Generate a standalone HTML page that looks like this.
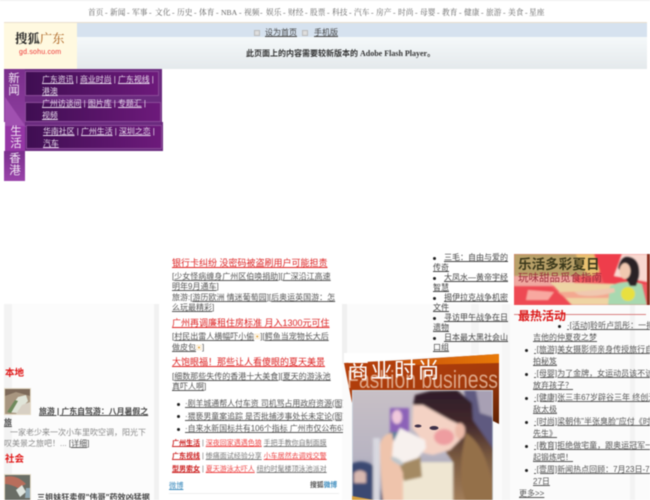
<!DOCTYPE html>
<html><head><meta charset="utf-8">
<style>
html,body{margin:0;padding:0;background:#fff}
#p{position:relative;width:650px;height:500px;overflow:hidden;background:#fff;font-family:"Liberation Serif","Noto Serif CJK SC",serif;color:#444;filter:blur(.4px)}
.a{position:absolute;white-space:nowrap}
.s{font-family:"Liberation Sans","Noto Sans CJK SC",sans-serif}
u{text-decoration:underline}
.n span{position:absolute;top:0;color:#666}
.pn{position:absolute;background:linear-gradient(90deg,#3f0e52,#6d1a7b);border:1px solid #8a4a98;box-sizing:border-box}
.l{position:absolute;white-space:nowrap;font:7.9px/11px "Liberation Sans","Noto Sans CJK SC",sans-serif;color:#e9dcee}
.t{position:absolute;color:#f2e6f5;font:11.5px/12px "Liberation Sans","Noto Sans CJK SC",sans-serif;text-align:center;width:22px}
.h{color:#d22;font:9px/11px "Liberation Sans","Noto Sans CJK SC",sans-serif;white-space:nowrap;position:absolute;text-decoration:underline}
.b{font:8px/10.3px "Liberation Sans","Noto Sans CJK SC",sans-serif;color:#555;position:absolute;white-space:nowrap}
.d{position:absolute;width:3px;height:3px;border-radius:50%;background:#222}
.r{font:8px/12px "Liberation Sans","Noto Sans CJK SC",sans-serif;color:#555;position:absolute;white-space:nowrap;text-decoration:underline}
.c{font:8px/10px "Liberation Sans","Noto Sans CJK SC",sans-serif;color:#444;position:absolute;white-space:nowrap;text-decoration:underline}
</style></head><body><div id="p">
<div class="a" style="left:0;top:0;width:650px;height:1px;background:#eee"></div>
<div class="n" style="position:absolute;left:0;top:7px;font-size:7.7px;line-height:11px;white-space:nowrap">
<span style="left:88px">首页</span><span style="left:105px">-</span><span style="left:110px">新闻</span><span style="left:127px">-</span><span style="left:132px">军事</span><span style="left:149px">-</span><span style="left:155px">文化</span><span style="left:172px">-</span><span style="left:177px">历史</span><span style="left:194px">-</span><span style="left:199px">体育</span><span style="left:216px">-</span><span style="left:221px">NBA</span><span style="left:239px">-</span><span style="left:244px">视频</span><span style="left:260px">-</span><span style="left:266px">娱乐</span><span style="left:283px">-</span><span style="left:288px">财经</span><span style="left:305px">-</span><span style="left:310px">股票</span><span style="left:327px">-</span><span style="left:332px">科技</span><span style="left:349px">-</span><span style="left:354px">汽车</span><span style="left:371px">-</span><span style="left:376px">房产</span><span style="left:393px">-</span><span style="left:398px">时尚</span><span style="left:415px">-</span><span style="left:420px">母婴</span><span style="left:437px">-</span><span style="left:442px">教育</span><span style="left:459px">-</span><span style="left:464px">健康</span><span style="left:481px">-</span><span style="left:486px">旅游</span><span style="left:503px">-</span><span style="left:508px">美食</span><span style="left:525px">-</span><span style="left:529px">星座</span>
</div>
<!-- header -->
<div class="a" style="left:4px;top:22px;width:643px;height:1px;background:#eadfce"></div>
<div class="a" style="left:4px;top:23px;width:73px;height:46px;background:#fff9e0"></div>
<div class="a" style="left:15px;top:31px;font:bold 12.4px/15px 'Noto Serif CJK SC',serif;color:#222">搜狐<span style="color:#a85a14;font-weight:normal">广东</span></div>
<div class="a s" style="left:19px;top:48px;font-size:7px;line-height:10px;color:#e33;letter-spacing:.2px">gd.sohu.com</div>
<div class="a" style="left:77px;top:23px;width:570px;height:14px;background:#d6e2ef"></div>
<div class="a" style="left:77px;top:37px;width:570px;height:32px;background:linear-gradient(#f5f9fa,#e4e9ec)"></div>
<div class="a" style="left:254px;top:30px;width:6px;height:6px;background:#dedede;border:.5px solid #bbb;box-sizing:border-box"></div>
<div class="a" style="left:265px;top:27px;font:8px/11px 'Liberation Sans','Noto Sans CJK SC',sans-serif;color:#444"><u>设为首页</u></div>
<div class="a" style="left:302px;top:30px;width:6px;height:6px;background:#dedede;border:.5px solid #bbb;box-sizing:border-box"></div>
<div class="a" style="left:314px;top:27px;font:8px/11px 'Liberation Sans','Noto Sans CJK SC',sans-serif;color:#444"><u>手机版</u></div>
<div class="a" style="left:246px;top:48px;font:bold 8px/11px 'Liberation Serif','Noto Sans CJK SC',serif;color:#333">此页面上的内容需要较新版本的 Adobe Flash Player。</div>
<!-- purple menu -->
<div class="a" style="left:4px;top:69px;width:158px;height:53px;background:#6a2a7e"></div>
<div class="a" style="left:4px;top:69px;width:21px;height:60px;background:linear-gradient(#7a2f8c,#8f3fa0)"></div>
<div class="a" style="left:25px;top:122px;width:138px;height:29px;background:#6a2a7e"></div>
<div class="a" style="left:5px;top:97px;width:21px;height:30px;background:#a050b0;clip-path:polygon(0 0,100% 100%,0 100%)"></div>
<div class="a" style="left:4px;top:122px;width:1px;height:29px;background:#fff"></div>
<div class="pn" style="left:25px;top:71px;width:134px;height:25px"></div>
<div class="pn" style="left:25px;top:102px;width:136px;height:20px"></div>
<div class="pn" style="left:26px;top:125px;width:136px;height:24px"></div>
<div class="a" style="left:5px;top:126px;width:20px;height:25px;background:#9536a5"></div>
<div class="t" style="left:3px;top:73px">新<br>闻</div>
<div class="t" style="left:5px;top:126px">生<br>活</div>
<div class="a" style="left:4px;top:151px;width:21px;height:30px;background:linear-gradient(#7a2f8c,#9a44aa)"></div>
<div class="t" style="left:4px;top:153px">香<br>港</div>
<div class="l" style="left:42px;top:74px"><u>广东资讯</u> | <u>商业时尚</u> | <u>广东视线</u> |</div>
<div class="l" style="left:42px;top:86px"><u>港澳</u></div>
<div class="l" style="left:42px;top:98px"><u>广州访谈间</u> | <u>图片库</u> | <u>专题汇</u> |</div>
<div class="l" style="left:42px;top:110px"><u>视频</u></div>
<div class="l" style="left:43px;top:126px"><u>华南社区</u> | <u>广州生活</u> | <u>深圳之恋</u> |</div>
<div class="l" style="left:43px;top:138px"><u>汽车</u></div>
<!-- lower backgrounds -->
<div class="a" style="left:4px;top:304px;width:155px;height:196px;background:#fcfcfc"></div>
<div class="a" style="left:4px;top:304px;width:8px;height:196px;background:#f3f3f3"></div>
<div class="a" style="left:154px;top:304px;width:5px;height:196px;background:#f1f1f1"></div>
<div class="a" style="left:342px;top:304px;width:308px;height:196px;background:#fbfbfb"></div>
<div class="a" style="left:342px;top:304px;width:5px;height:60px;background:#f0f0f0"></div>
<div class="a" style="left:471px;top:304px;width:8px;height:50px;background:#f4f4f4"></div>
<div class="a" style="left:502px;top:304px;width:8px;height:196px;background:#f6f6f6"></div>
<div class="a" style="left:630px;top:304px;width:5px;height:196px;background:#f3f3f3"></div>
<!-- left col -->
<div class="a s" style="left:5px;top:368px;font-size:9.5px;line-height:12px;font-weight:bold;color:#e01818">本地</div>
<svg class="a" style="left:4px;top:388px" width="27" height="27" viewBox="0 0 27 27"><rect width="27" height="27" fill="#a89680"/><path d="M1,1 H26 V8 L12,4 L1,8Z" fill="#7d6a5a"/><path d="M3,24 L14,9 L22,7 L24,13 L13,25Z" fill="#e0e4d8"/><path d="M3,24 L11,12 L14,13 L7,25Z" fill="#6f8a5c"/><path d="M18,17 L26,14 V26 H12Z" fill="#d8d0c4"/><rect x=".5" y=".5" width="26" height="26" fill="none" stroke="#e5dcc8"/></svg>
<div class="a s" style="left:39px;top:406px;font-size:7.9px;line-height:11px;font-weight:bold;color:#444"><u>旅游 | 广东自驾游：八月暑假之</u></div>
<div class="a s" style="left:4px;top:417px;font-size:7.9px;line-height:11px;font-weight:bold;color:#444"><u>旅</u></div>
<div class="a s" style="left:10px;top:427px;font-size:8px;line-height:11px;color:#888">一家老少来一次小车里吹空调，阳光下</div>
<div class="a s" style="left:4px;top:437.5px;font-size:8px;line-height:11px;color:#888">叹美景之旅吧！... <span style="color:#555"><u>[详细]</u></span></div>
<div class="a s" style="left:5px;top:454px;font-size:9.5px;line-height:12px;font-weight:bold;color:#e01818">社会</div>
<svg class="a" style="left:4px;top:474px" width="27" height="27" viewBox="0 0 27 27"><rect width="27" height="27" fill="#6a6e66"/><path d="M1,3 Q12,0 22,10 L14,14 Q6,10 1,10Z" fill="#b86e5c"/><path d="M12,16 L18,11 L22,18 L16,23Z" fill="#dfe6e0"/><path d="M22,14 H26 V24 H21Z" fill="#8fa8b4"/><rect x=".5" y=".5" width="26" height="26" fill="none" stroke="#e5dcc8"/></svg>
<div class="a s" style="left:37px;top:492px;font-size:8.1px;line-height:11px;font-weight:bold;color:#444"><u>三姐妹狂卖假"伟哥"药效凶猛据</u></div>
<!-- middle col -->
<div class="h" style="left:172px;top:258px">银行卡纠纷 没密码被盗刷用户可能担责</div>
<div class="b" style="left:172px;top:272px">[<u>少女怪病缠身广州区伯唤捐助</u>][<u>广深沿江高速</u><br><u>明年9月通车</u>]</div>
<div class="b" style="left:172px;top:293px">旅游:[<u>游历欧洲 情迷葡萄园</u>][<u>后奥运英国游：怎</u><br><u>么玩最精彩</u>]</div>
<div class="h" style="left:172px;top:318px">广州再调廉租住房标准 月入1300元可住</div>
<div class="b" style="left:172px;top:332px">[<u>村民出雷人横幅吓小偷</u><span style="color:#e8b050;font-size:6px">▣</span>][<u>鳄鱼当宠物长大后</u><br><u>做皮包</u><span style="color:#e8b050;font-size:6px">▣</span>]</div>
<div class="h" style="left:172px;top:357px">大饱眼福！那些让人看傻眼的夏天美景</div>
<div class="b" style="left:172px;top:372px">[<u>细数那些失传的香港十大美食</u>][<u>夏天的游泳池</u><br><u>真吓人啊</u>]</div>
<div class="d" style="left:177px;top:403px"></div>
<div class="d" style="left:177px;top:415px"></div>
<div class="d" style="left:177px;top:428px"></div>
<div class="a" style="left:185px;top:398px;width:158px;overflow:hidden;font:7.9px/12px 'Liberation Sans','Noto Sans CJK SC',sans-serif;color:#555"><u>·剧羊城通帮人付车资 司机骂占用政府资源(图)</u></div>
<div class="a" style="left:185px;top:411px;width:158px;overflow:hidden;font:7.9px/12px 'Liberation Sans','Noto Sans CJK SC',sans-serif;color:#555"><u>·猥亵男童案追踪 是否批捕涉事处长未定论(图)</u></div>
<div class="a" style="left:185px;top:423px;width:158px;overflow:hidden;font:7.9px/12px 'Liberation Sans','Noto Sans CJK SC',sans-serif;color:#555"><u>·自来水新国标共有106个指标 广州市仅公布6项</u></div>
<div class="a s" style="left:172px;top:438px;font-size:7px;line-height:11px;color:#777"><b style="color:#c22"><u>广州生活</u></b> | <span style="color:#e44"><u>深夜回家遇遇色狼</u></span> <u>手把手教你自制面膜</u></div>
<div class="a s" style="left:172px;top:451px;font-size:7px;line-height:11px;color:#777"><b style="color:#c22"><u>广东视线</u></b> | <u>惨痛面试经验分享</u> <span style="color:#e44"><u>小车居然去调戏交警</u></span></div>
<div class="a s" style="left:172px;top:464px;font-size:7px;line-height:11px;color:#777"><b style="color:#c22"><u>型男索女</u></b> | <span style="color:#e44"><u>夏天游泳太吓人</u></span> <u>纽约时髦楼顶泳池派对</u></div>
<div class="a s" style="left:169px;top:480px;font-size:7.2px;line-height:11px;color:#3c8bbd"><u>微博</u></div>
<div class="a s" style="left:310px;top:480px;font-size:6.8px;line-height:11px;font-weight:bold;color:#555">搜狐<span style="color:#3c8bbd">微博</span></div>
<div class="a" style="left:169px;top:493px;width:170px;height:1px;background:#eee"></div>
<!-- center list -->
<div class="d" style="left:433px;top:257px"></div>
<div class="d" style="left:433px;top:277px"></div>
<div class="d" style="left:433px;top:297px"></div>
<div class="d" style="left:433px;top:317px"></div>
<div class="d" style="left:433px;top:337px"></div>
<div class="c" style="left:444px;top:253px">三毛：自由与爱的</div><div class="c" style="left:433px;top:263px">传奇</div>
<div class="c" style="left:444px;top:273px">大凤水—黄帝宇经</div><div class="c" style="left:433px;top:283px">智慧</div>
<div class="c" style="left:444px;top:293px">揭伊拉克战争机密</div><div class="c" style="left:433px;top:303px">文件</div>
<div class="c" style="left:444px;top:313px">寻访甲午战争在日</div><div class="c" style="left:433px;top:323px">遗物</div>
<div class="c" style="left:444px;top:333px">日本最大黑社会山</div><div class="c" style="left:433px;top:343px">口组</div>
<!-- business image -->
<svg class="a" style="left:344px;top:353px" width="156" height="147" viewBox="0 0 156 147">
<defs>
<linearGradient id="o" x1="0" y1="0" x2="1" y2="1"><stop offset="0" stop-color="#b9400a"/><stop offset=".6" stop-color="#a33a0c"/><stop offset="1" stop-color="#5f2204"/></linearGradient>
<linearGradient id="tp" x1="0" y1="0" x2="1" y2="0"><stop offset="0" stop-color="#c8500a"/><stop offset="1" stop-color="#e87a08"/></linearGradient>
<linearGradient id="bg" x1="0" y1="0" x2="0" y2="1"><stop offset="0" stop-color="#c8c0c6"/><stop offset=".6" stop-color="#b8b4c2"/><stop offset="1" stop-color="#8c8fa8"/></linearGradient>
<linearGradient id="hr" x1="0" y1="0" x2="0" y2="1"><stop offset="0" stop-color="#2e1c28"/><stop offset=".3" stop-color="#43292c"/><stop offset=".6" stop-color="#7a5a40"/><stop offset="1" stop-color="#a4805c"/></linearGradient>
<filter id="bl" x="0" y="0" width="100%" height="100%"><feGaussianBlur stdDeviation="1.2"/></filter>
<clipPath id="cp"><rect x="8" y="37" width="141" height="110"/></clipPath>
</defs>
<polygon points="0,0 132,0 0,10" fill="#fff"/>
<polygon points="0,10 60,7 155,1 155,71 149,68 149,37 8,37 8,50" fill="url(#o)"/>
<polygon points="50,8 155,1 155,10 70,12" fill="url(#tp)"/>
<text x="3" y="35" font-family="Liberation Sans" font-size="25" fill="#e7b89c" opacity=".85" textLength="151" lengthAdjust="spacingAndGlyphs">Fashion business</text>
<rect x="8" y="37" width="141" height="110" fill="url(#bg)"/>
<g clip-path="url(#cp)"><g filter="url(#bl)">
<path d="M120,37 H152 V100 L125,70Z" fill="#5f5a80"/>
<path d="M132,37 H152 V65 L136,60Z" fill="#a8a0b4"/>
<rect x="46" y="55" width="19" height="24" fill="#8c62b8"/>
<ellipse cx="53" cy="64" rx="5" ry="7" fill="#f0c8dc"/>
<rect x="45" y="79" width="18" height="8" fill="#5a7d98"/>
<path d="M5,112 q14,-8 26,2 L40,150 L5,150Z" fill="#3a4a72"/>
<path d="M29,85 l7,0 l0,65 l-7,0Z" fill="#d8d8e0"/>
<path d="M10,120 q6,-5 12,0 v10 h-12Z" fill="#d8b8b0"/>
<path d="M69,52 L71,42 L86,38 L113,37 L128,50 L129,67 L150,97 L150,150 L109,150 L108,107 L80,70Z" fill="url(#hr)"/>
<path d="M122,80 Q146,95 150,150 H122 Q112,120 122,80Z" fill="#94704a"/>
<path d="M58,109 L109,109 V150 H58Z" fill="#efe6d2"/>
<path d="M53,100 L76,102 L78,124 L60,128Z" fill="#a48a64"/>
<path d="M69,52 L79,52 L106,67 L121,74 L116,87 L106,97 L89,102 L79,100 L81,90 L74,82 L68,75Z" fill="#f4d2c4"/>
<ellipse cx="100" cy="84" rx="10" ry="8" fill="#ee9da0"/>
<ellipse cx="116" cy="78" rx="5" ry="8" fill="#ecbaa8"/>
<path d="M36,92 Q38,81 48,80 L52,104 L59,120 L59,150 H39 Q36,120 36,92Z" fill="#efc4ac"/>
<path d="M56,75 L81,87 L82,95 L74,105 L59,110 L48,103 L49,90Z" fill="#f7f1ee"/>
<ellipse cx="53" cy="108" rx="7" ry="2.5" fill="#bfc6ca" transform="rotate(30 53 108)"/>
</g>
<ellipse cx="74" cy="73" rx="3.5" ry="1.5" fill="#3d3048"/>
<ellipse cx="90" cy="75" rx="4.5" ry="2" fill="#3d3048"/>
</g>
<rect x="8.500" y="37.500" width="140" height="110" fill="none" stroke="#cfe0ea" stroke-width=".6"/>
<path d="M8,147 L8,143 L30,147Z" fill="#d7a040"/>
</svg>
<div class="a s" style="left:347px;top:358px;font-size:22px;line-height:26px;color:#fff;letter-spacing:1.5px">商业时尚</div>
<!-- right banner -->
<svg class="a" style="left:514px;top:254px" width="136" height="51" viewBox="0 0 136 51">
<defs><filter id="b2" x="0" y="0" width="100%" height="100%"><feGaussianBlur stdDeviation=".8"/></filter></defs>
<rect width="134" height="51" fill="#f05a60"/>
<g filter="url(#b2)">
<path d="M0,0 H72 L92,10 L80,22 H0Z" fill="#b8a068"/>
<path d="M62,0 H80 L96,12 L78,22 L66,14Z" fill="#e8c070"/>
<path d="M0,22 H60 V32 H0Z" fill="#f0a8a0"/>
<path d="M80,0 H134 V30 H90Z" fill="#ee3c4c"/>
<path d="M108,0 H134 V28 L100,22Z" fill="#f9d8d0"/>
<path d="M0,32 H36 L58,51 H0Z" fill="#ee4a52"/>
<path d="M14,36 L40,38 L34,46 H12Z" fill="#f8a8a0"/>
<path d="M36,28 L100,30 V51 H58Z" fill="#eed4a4"/>
<path d="M44,38 L100,37 L96,44 L52,44Z" fill="#f3a890"/>
<path d="M96,32 q16,-7 32,-2 l5,21 H94Z" fill="#a8d8b0"/>
<ellipse cx="114" cy="40" rx="7" ry="7" fill="#e8e040"/>
<path d="M104,14 q3,-14 12,-11 q11,3 9,20 l-3,9 h-6 l-2,-4 Z" fill="#2c2028"/>
<ellipse cx="111" cy="17" rx="5.500" ry="8" fill="#f0c8b0"/>
<path d="M60,38 q22,-2 40,-4 l1,4 q-20,6 -36,3Z" fill="#f0c8b0"/>
</g>
<rect x="133" width="3" height="51" fill="#8a3020"/>
</svg>
<div class="a s" style="left:518px;top:257px;font-size:13.6px;line-height:16px;font-weight:bold;color:#3d3a1c">乐活多彩夏日</div>
<div class="a s" style="left:518px;top:272px;font-size:10.5px;line-height:13px;color:#9a2d3a">玩味甜品觅食指南</div>
<div class="a" style="left:514px;top:314px;width:132px;height:1px;background:#d98080"></div>
<div class="a s" style="left:518px;top:309px;font-size:12px;line-height:15px;font-weight:bold;color:#dc1a1a">最热活动</div>
<div class="d" style="left:558px;top:325px"></div>
<div class="r" style="left:567px;top:320px">·[活动]聆听卢凯彤：一把</div>
<div class="r" style="left:533px;top:332px">吉他的仲夏夜之梦</div>
<div class="d" style="left:525px;top:349px"></div>
<div class="r" style="left:534px;top:344px">·[旅游]美女摄影师亲身传授旅行自</div>
<div class="r" style="left:533px;top:356px">拍秘笈</div>
<div class="d" style="left:525px;top:373px"></div>
<div class="r" style="left:534px;top:368px">·[母婴]为了金牌，女运动员该不该</div>
<div class="r" style="left:533px;top:380px">放弃孩子？</div>
<div class="d" style="left:525px;top:397px"></div>
<div class="r" style="left:534px;top:392px">·[健康]张三丰67岁辟谷三年 终创无</div>
<div class="r" style="left:533px;top:404px">敌太极</div>
<div class="d" style="left:525px;top:421px"></div>
<div class="r" style="left:534px;top:416px">·[时尚]梁朝伟"半张臭脸"应付《时</div>
<div class="r" style="left:533px;top:428px">先生》</div>
<div class="d" style="left:525px;top:445px"></div>
<div class="r" style="left:534px;top:440px">·[教育]拒绝做宅童，跟奥运冠军一</div>
<div class="r" style="left:533px;top:452px">起锻炼吧！</div>
<div class="d" style="left:525px;top:469px"></div>
<div class="r" style="left:534px;top:464px">·[壹周]新闻热点回顾：7月23日-7月</div>
<div class="r" style="left:533px;top:476px">27日</div>
<div class="a s" style="left:519px;top:488px;font-size:8px;line-height:12px;color:#555"><u>更多&gt;&gt;</u></div>
</div></body></html>
